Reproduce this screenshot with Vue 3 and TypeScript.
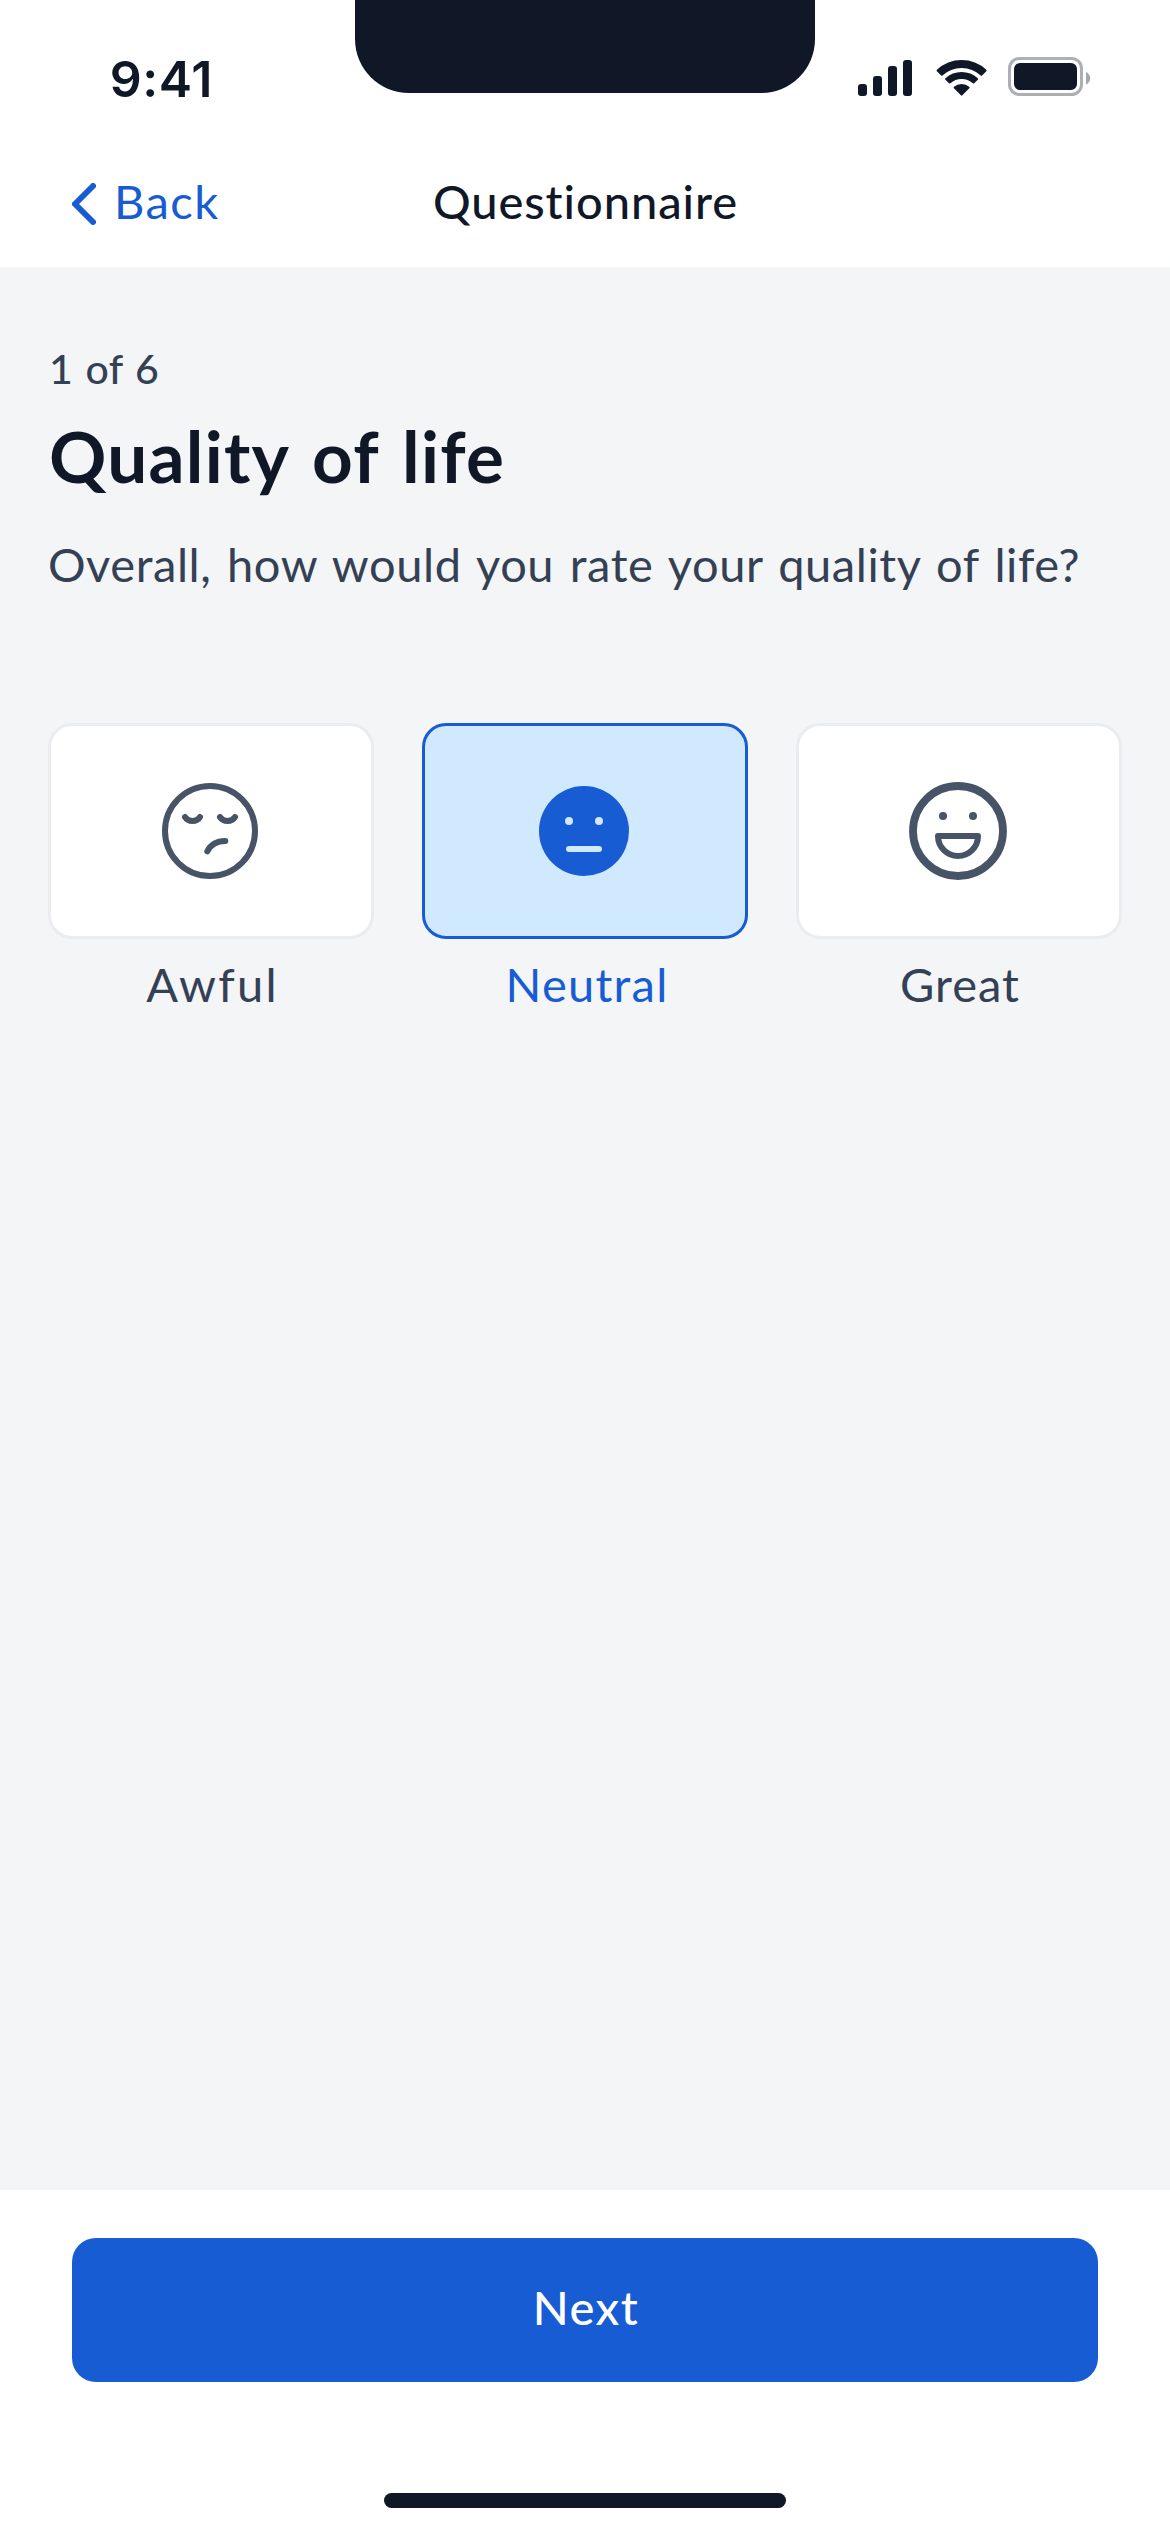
<script setup lang="ts">
import { ref } from 'vue'

type Mood = 'awful' | 'neutral' | 'great'

const options: { id: Mood; label: string }[] = [
  { id: 'awful', label: 'Awful' },
  { id: 'neutral', label: 'Neutral' },
  { id: 'great', label: 'Great' },
]

const selected = ref<Mood>('neutral')
</script>

<template>
  <div class="screen">
    <header class="top">
      <div class="notch"></div>
      <div class="status">
        <span class="time">9:41</span>
        <svg class="indicators" width="234" height="42" viewBox="0 0 234 42">
          <g fill="#101828">
            <rect x="0" y="28" width="9" height="12" rx="3" />
            <rect x="15" y="20" width="9" height="20" rx="3" />
            <rect x="30" y="10" width="9" height="30" rx="3" />
            <rect x="45" y="4" width="9" height="36" rx="3" />
          </g>
          <g transform="translate(103.6 40)" fill="#101828" stroke="#101828" stroke-width="2" stroke-linejoin="round">
            <path d="M-24 -25.45A35 35 0 0 1 24 -25.45L19.8 -21.2A29 29 0 0 0 -19.8 -21.2Z" />
            <path d="M-15.5 -17A23 23 0 0 1 15.5 -17L11.9 -13.5A18 18 0 0 0 -11.9 -13.5Z" />
            <path d="M-7 -8.45A11 11 0 0 1 7 -8.45L0 -1.4Z" />
          </g>
          <rect x="151.5" y="2.5" width="72" height="36" rx="10" fill="none" stroke="#adafb6" stroke-width="3" />
          <rect x="156" y="7" width="63" height="27" rx="6" fill="#101828" />
          <path d="M228 16C230.5 17 232.2 19.4 232.2 22.2C232.2 25 230.5 27.4 228 28.4Z" fill="#a3a7b0" />
        </svg>
      </div>
      <nav class="nav">
        <a class="back">
          <svg class="chevron" width="24" height="42" viewBox="0 0 24 42">
            <path d="M21 3L3 21L21 39" fill="none" stroke="#175cd3" stroke-width="6" stroke-linecap="round" stroke-linejoin="round" />
          </svg>
          <span>Back</span>
        </a>
        <h1 class="nav-title">Questionnaire</h1>
      </nav>
    </header>

    <main class="content">
      <p class="step">1 of 6</p>
      <h2 class="title">Quality of life</h2>
      <p class="question">Overall, how would you rate your quality of life?</p>

      <div class="options">
        <div
          v-for="option in options"
          :key="option.id"
          class="option"
          :class="[option.id, { selected: selected === option.id }]"
          @click="selected = option.id"
        >
          <div class="card">
            <svg class="face" width="108" height="108" viewBox="-53 -54 108 108" fill="none" stroke-linecap="round" stroke-linejoin="round">
              <g v-if="option.id === 'awful'" stroke="#475467" stroke-width="6">
                <circle r="45" />
                <path d="M-25 -14C-22 -8.7 -13 -8.7 -10 -14M10 -14C13 -8.7 22 -8.7 25 -14" />
                <path d="M-2.7 20.3Q2.5 10 15.3 10" />
              </g>
              <g v-else-if="option.id === 'neutral'">
                <circle r="45" fill="#175cd3" />
                <circle cx="-15" cy="-10" r="4" fill="#d1e9ff" />
                <circle cx="15" cy="-10" r="4" fill="#d1e9ff" />
                <path d="M-15 18H15" stroke="#d1e9ff" stroke-width="6" />
              </g>
              <g v-else>
                <circle r="45" stroke="#475467" stroke-width="7.8" />
                <circle cx="-15" cy="-15" r="4" fill="#475467" />
                <circle cx="15" cy="-15" r="4" fill="#475467" />
                <path d="M-20 5H20A20 20 0 0 1 -20 5Z" stroke="#475467" stroke-width="6" />
              </g>
            </svg>
          </div>
          <span class="label">{{ option.label }}</span>
        </div>
      </div>
    </main>

    <footer class="footer">
      <button class="next" type="button">Next</button>
      <div class="home-indicator"></div>
    </footer>
  </div>
</template>

<style>
body {
  margin: 0;
}
</style>

<style scoped>
.screen {
  display: flex;
  flex-direction: column;
  width: 1170px;
  height: 2532px;
  overflow: hidden;
  background: #f3f5f7;
  color: #344054;
  font-family: Lato, "Open Sans", sans-serif;
  font-size: 47px;
  line-height: 72px;
  font-variant-ligatures: none;
}

.top {
  position: relative;
  box-sizing: border-box;
  height: 267px;
  background: #fff;
}

.notch {
  position: absolute;
  top: 0;
  left: 355px;
  width: 460px;
  height: 93px;
  border-radius: 0 0 54px 54px;
  background: #101828;
}

.status {
  display: flex;
  box-sizing: border-box;
  height: 135px;
  align-items: flex-start;
  justify-content: space-between;
  padding: 48px 78px 0 109.7px;
}

.time {
  padding-top: 1px;
  color: #101828;
  font-family: Inter, sans-serif;
  font-size: 50px;
  font-weight: 600;
  line-height: 60px;
  letter-spacing: 0.6px;
}

.indicators {
  margin-top: 8px;
}

.nav {
  display: grid;
  grid-template-columns: 1fr auto 1fr;
  height: 132px;
  align-items: center;
  padding: 0 72px;
}

.back {
  display: flex;
  align-items: center;
  gap: 18px;
  color: #175cd3;
  letter-spacing: 1.5px;
}

.chevron {
  margin-top: 6px;
}

.nav-title {
  margin: 0;
  padding-left: 1px;
  color: #101828;
  font-size: 47px;
  font-weight: 500;
  letter-spacing: 0.95px;
}

.content {
  flex: 1;
  padding: 72px 48px 0;
}

.step {
  margin: 0 0 9px;
  padding-left: 1px;
  font-size: 41px;
  font-weight: 500;
  line-height: 60px;
  letter-spacing: 0.3px;
  word-spacing: 1.75px;
}

.title {
  margin: 0 0 24px;
  padding-left: 1px;
  color: #101828;
  font-size: 71px;
  font-weight: 700;
  line-height: 96px;
  letter-spacing: 1.25px;
  word-spacing: 5px;
}

.question {
  margin: 0 0 123px;
  letter-spacing: 0.57px;
  word-spacing: 3px;
  white-space: nowrap;
}

.options {
  display: flex;
  gap: 48px;
}

.option {
  display: flex;
  flex: 1;
  flex-direction: column;
  align-items: center;
  gap: 9px;
}

.card {
  display: flex;
  box-sizing: border-box;
  width: 326px;
  height: 216px;
  align-items: center;
  justify-content: center;
  border: 3px solid #eaecf0;
  border-radius: 24px;
  background: #fff;
}

.face {
  display: block;
}

.awful .label {
  padding-left: 3px;
  letter-spacing: 2.3px;
}

.neutral .label {
  padding-left: 4px;
  letter-spacing: 1.25px;
}

.great .label {
  padding-left: 2px;
  letter-spacing: 1px;
}

.selected .card {
  border-color: #175cd3;
  background: #d1e9ff;
}

.selected .label {
  color: #175cd3;
}

.footer {
  display: flex;
  box-sizing: border-box;
  height: 342px;
  flex-direction: column;
  align-items: center;
  justify-content: space-between;
  padding: 48px 72px 24px;
  background: #fff;
}

.next {
  box-sizing: border-box;
  width: 100%;
  height: 144px;
  padding: 0 0 6px 2px;
  border: 0;
  border-radius: 24px;
  background: #175cd3;
  color: #fff;
  font: inherit;
  font-weight: 500;
  letter-spacing: 1.5px;
}

.home-indicator {
  width: 402px;
  height: 15px;
  border-radius: 7.5px;
  background: #101828;
}
</style>
